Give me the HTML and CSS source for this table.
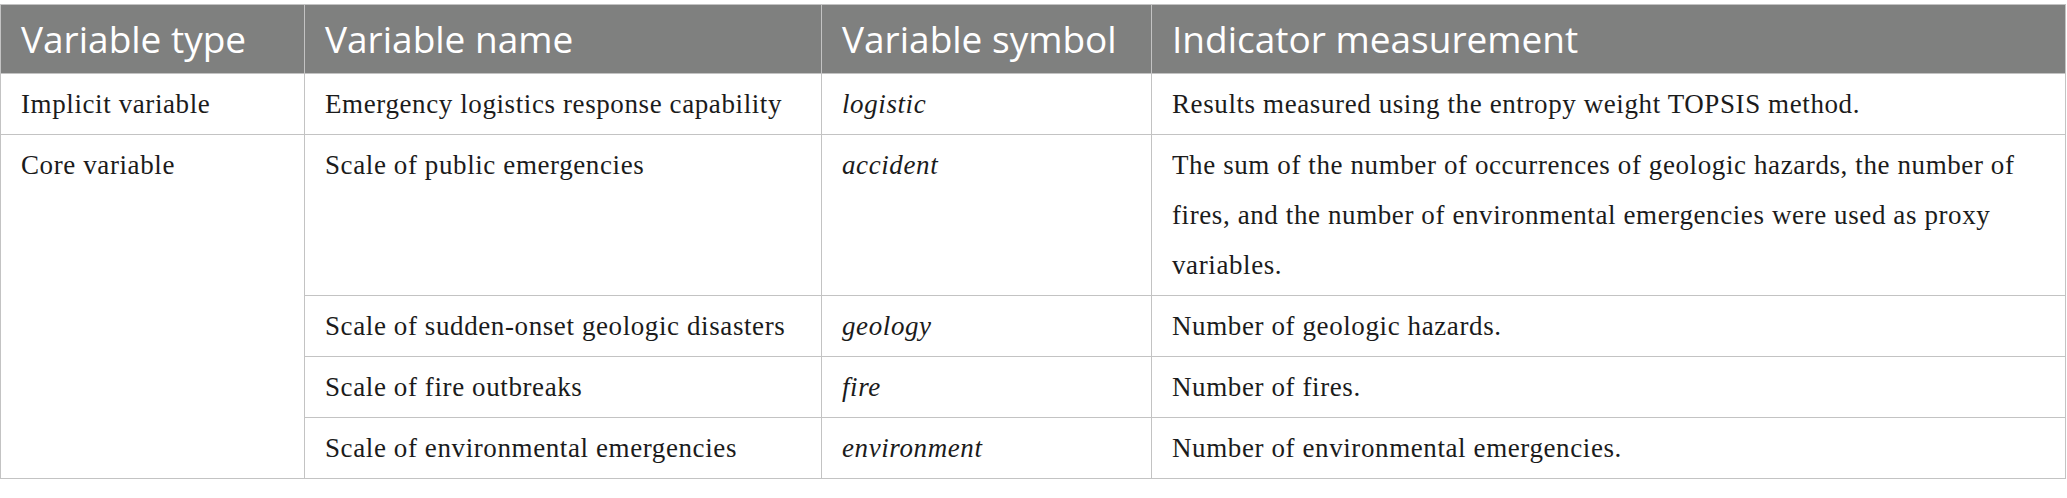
FILE: index.html
```html
<!DOCTYPE html>
<html lang="en">
<head>
<meta charset="utf-8">
<title>Variables</title>
<link rel="stylesheet" href="styles.css">
</head>
<body>
<table class="vars">
  <colgroup>
    <col class="c-type">
    <col class="c-name">
    <col class="c-sym">
    <col class="c-meas">
  </colgroup>
  <thead>
    <tr>
      <th>Variable type</th>
      <th>Variable name</th>
      <th>Variable symbol</th>
      <th>Indicator measurement</th>
    </tr>
  </thead>
  <tbody>
    <tr>
      <td>Implicit variable</td>
      <td>Emergency logistics response capability</td>
      <td class="sym">logistic</td>
      <td>Results measured using the entropy weight TOPSIS method.</td>
    </tr>
    <tr>
      <td rowspan="4">Core variable</td>
      <td>Scale of public emergencies</td>
      <td class="sym">accident</td>
      <td>The sum of the number of occurrences of geologic hazards, the number of fires, and the number of environmental emergencies were used as proxy variables.</td>
    </tr>
    <tr>
      <td>Scale of sudden-onset geologic disasters</td>
      <td class="sym">geology</td>
      <td>Number of geologic hazards.</td>
    </tr>
    <tr>
      <td>Scale of fire outbreaks</td>
      <td class="sym">fire</td>
      <td>Number of fires.</td>
    </tr>
    <tr>
      <td>Scale of environmental emergencies</td>
      <td class="sym">environment</td>
      <td>Number of environmental emergencies.</td>
    </tr>
  </tbody>
</table>
</body>
</html>
```
FILE: styles.css
```css
html, body {
  margin: 0;
  padding: 0;
  background: #ffffff;
}

body {
  padding-top: 4px;
}

.vars {
  width: 2066px;
  border-collapse: collapse;
  table-layout: fixed;
  font-family: "Liberation Serif", "Times New Roman", serif;
  color: #1b1b1b;
}

.c-type { width: 304px; }
.c-name { width: 517px; }
.c-sym { width: 330px; }
.c-meas { width: auto; }

.vars th,
.vars td {
  border: 1px solid #c3c3c3;
  text-align: left;
  vertical-align: top;
}

.vars th {
  background: #7f807f;
  color: #ffffff;
  font-family: "Open Sans", "Noto Sans", sans-serif;
  font-weight: 400;
  font-size: 37px;
  line-height: 48px;
  padding: 10px 20px;
}

.vars td {
  font-size: 27px;
  letter-spacing: 0.6px;
  line-height: 50px;
  padding: 5px 20px;
}

.vars .sym {
  font-style: italic;
}
```
